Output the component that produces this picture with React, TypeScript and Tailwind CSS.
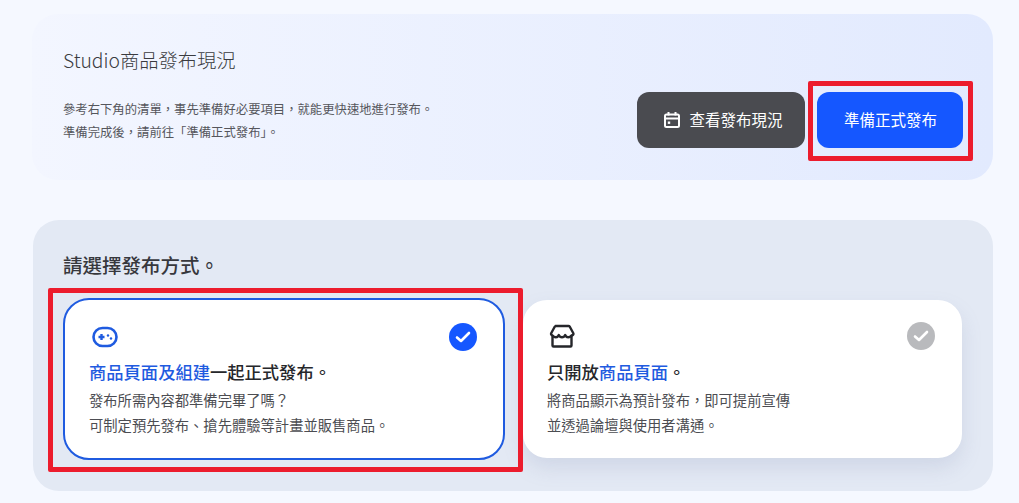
export default function App() {
  return (
    <div className="relative h-[503px] w-[1019px] overflow-hidden bg-[#f5f8ff] pl-[32px] pr-[26px] pt-[14px] font-['Noto_Sans_CJK_TC',sans-serif] text-[#2a2b2f]">
      {/* Status banner */}
      <section className="flex h-[166px] items-end justify-between rounded-[26px] bg-gradient-to-r from-[#f3f6ff] to-[#e2eafe] pb-[32px] pl-[31px] pr-[30px]">
        <div className="mb-[4px]">
          <h2 className="text-[19.3px] font-light leading-[28px] text-[#3a3b40]">Studio商品發布現況</h2>
          <p className="mt-[24px] text-[12.35px] leading-[23px] text-[#55565c]">
            參考右下角的清單，事先準備好必要項目，就能更快速地進行發布。
            <br />
            準備完成後，請前往「準備正式發布」。
          </p>
        </div>
        <div className="flex gap-[12px]">
          <button className="flex h-[56px] w-[168px] items-center justify-center gap-[8px] rounded-[12px] bg-[#4a4b50] pl-[4px] text-[15.5px] text-white">
            <svg width="18" height="18" viewBox="0 0 18 18" fill="none" stroke="currentColor" strokeWidth="2">
              <rect x="2" y="3.5" width="14" height="12.5" rx="1.5" />
              <path d="M2 7.5h14M5.5 1v3.5M12.5 1v3.5" />
              <rect x="4.8" y="10.5" width="2.4" height="2.4" fill="currentColor" stroke="none" />
            </svg>
            查看發布現況
          </button>
          <button className="h-[56px] w-[146px] rounded-[12px] bg-[#1557ff] pl-[1px] text-[15.5px] text-white">準備正式發布</button>
        </div>
      </section>

      {/* Release type */}
      <section className="ml-[1px] mt-[40px] h-[271px] rounded-[26px] bg-[#e3e9f4] pl-[30px] pt-[32px]">
        <h2 className="text-[19.5px] font-medium leading-[26px] text-[#37383d]">請選擇發布方式。</h2>
        <div className="mt-[20px] flex items-center gap-[18px]">
          <div className="h-[162px] w-[442px] rounded-[26px] border-2 border-[#1f5be0] bg-white pl-[24px] pr-[26px] pt-[22px]">
            <div className="flex h-[30px] items-start justify-between">
              <svg className="ml-[3px] mt-[4px]" width="26" height="22" viewBox="0 0 26 22" fill="none">
                <rect x="1.5" y="2" width="23" height="18" rx="9" stroke="#1f5be0" strokeWidth="2.6" />
                <path d="M6.5 11h6M9.500 8v6" stroke="#1f5be0" strokeWidth="2.4" />
                <circle cx="16" cy="9.5" r="1.2" fill="#1f5be0" />
                <circle cx="19" cy="12.5" r="1.2" fill="#1f5be0" />
              </svg>
              <span className="mt-[1px]">
                <CheckBadge color="bg-[#1557ff]" />
              </span>
            </div>
            <h3 className="mt-[7px] text-[17.3px] font-medium leading-[26px] text-[#26272b]">
              <span className="text-[#1f5be0]">商品頁面及組建</span>一起正式發布。
            </h3>
            <p className="mt-[3px] text-[14.3px] leading-[24.5px] text-[#4c4d52]">
              發布所需內容都準備完畢了嗎？
              <br />
              可制定預先發布、搶先體驗等計畫並販售商品。
            </p>
          </div>

          <div className="h-[158px] w-[439px] rounded-[24px] bg-white pl-[24px] pr-[27px] pt-[22px] shadow-[0_10px_20px_rgba(120,135,170,0.18)]">
            <div className="flex h-[30px] items-start justify-between">
              <svg className="ml-[2px] mt-[2px]" width="26" height="25" viewBox="0 0 26 25" fill="none" stroke="#25262a" strokeWidth="2.4" strokeLinejoin="round" strokeLinecap="round">
                <path d="M6.5 2h13c.6 0 1 .3 1.300.7l3.400 6.300c.3.6.3 1.300-.1 1.800L22.500 12v9.500c0 .6-.4 1-1 1h-17c-.6 0-1-.4-1-1V12l-1.100-1.200c-.4-.5-.4-1.200-.1-1.800l3.400-6.300c.3-.4.700-.7 1.300-.7z" />
                <path d="M3.500 11.500c2 2.500 5 2.500 6.300-.5 1.300 3 5.100 3 6.400 0 1.300 3 4.300 3 6.300.5" />
              </svg>
              <CheckBadge color="bg-[#b9babd]" />
            </div>
            <h3 className="mt-[7px] text-[17.3px] font-medium leading-[26px] text-[#26272b]">
              只開放<span className="text-[#1f5be0]">商品頁面</span>。
            </h3>
            <p className="mt-[3px] text-[14.3px] leading-[24.5px] text-[#4c4d52]">
              將商品顯示為預計發布，即可提前宣傳
              <br />
              並透過論壇與使用者溝通。
            </p>
          </div>
        </div>
      </section>

      {/* Annotation boxes drawn over the screenshot */}
      <div className="absolute left-[808px] top-[81px] h-[80px] w-[165px] rounded-[2px] border-[5px] border-[#ec1c2d]" />
      <div className="absolute left-[48px] top-[288px] h-[184px] w-[475px] rounded-[2px] border-[5px] border-[#ec1c2d]" />
    </div>
  );
}

function CheckBadge({ color }: { color: string }) {
  return (
    <span className={`flex h-[28px] w-[28px] items-center justify-center rounded-full ${color}`}>
      <svg width="16" height="12" viewBox="0 0 16 12" fill="none" stroke="white" strokeWidth="2.6" strokeLinecap="round" strokeLinejoin="round">
        <path d="M2 6.5l4 3.500 8-8" />
      </svg>
    </span>
  );
}
